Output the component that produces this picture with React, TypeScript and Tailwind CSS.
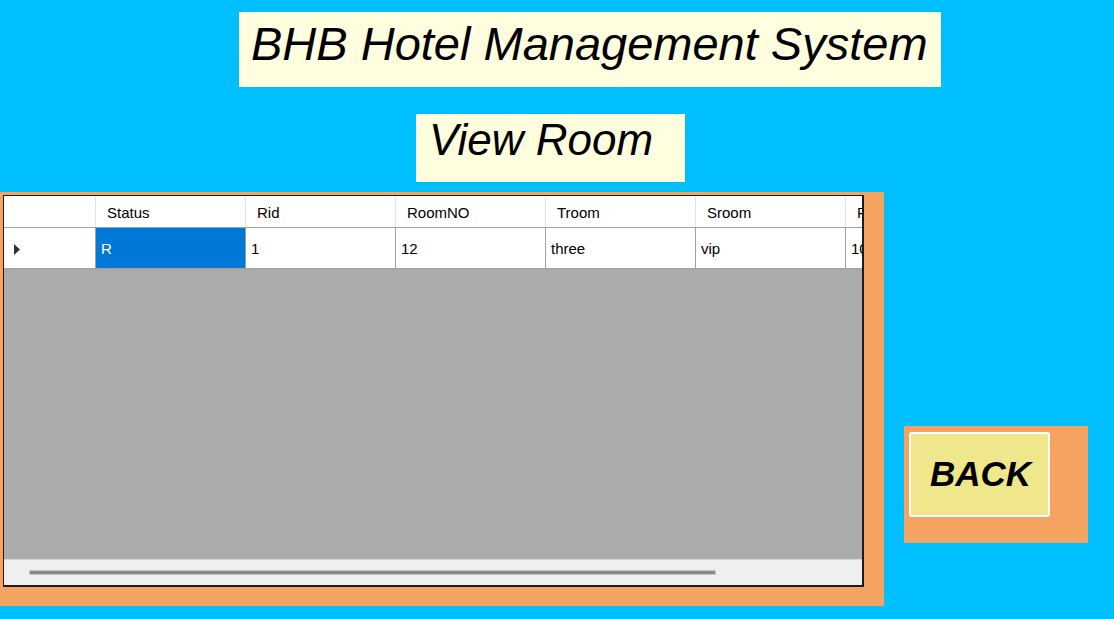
const COLUMNS = ["Status", "Rid", "RoomNO", "Troom", "Sroom", "Price"];
const ROW = ["R", "1", "12", "three", "vip", "1000"];

const font = { fontFamily: '"Liberation Sans", Arial, sans-serif' };

const RoomGrid = () => {
  return (
    <div className="flex h-[392px] w-[861px] flex-col border border-r-2 border-b-2 border-[#1c1c1c] bg-[#ababab] overflow-hidden">
      {/* header row */}
      <div className="flex h-[32px] shrink-0 border-b border-[#a0a0a0] bg-white text-[15px] text-black">
        <div className="w-[92px] shrink-0 border-r border-[#e3e3e3]" />
        {COLUMNS.map((c) => (
          <div key={c} className="flex w-[150px] shrink-0 items-center border-r border-[#e3e3e3] pl-[11px] pt-[3px]">
            {c}
          </div>
        ))}
      </div>

      {/* the one data row */}
      <div className="flex h-[41px] shrink-0 border-b border-[#a0a0a0] bg-white text-[15px] text-black">
        <div className="flex w-[92px] shrink-0 items-center border-r border-[#a0a0a0] pl-[10px] pt-[3px]">
          <svg width="7" height="11" viewBox="0 0 7 11">
            <path d="M0 0 L6 5.5 L0 11 Z" fill="#303030" />
          </svg>
        </div>
        {ROW.map((v, i) => (
          <div
            key={i}
            className={`flex w-[150px] shrink-0 items-center border-r border-[#a0a0a0] pl-[5px] pt-[3px] ${i === 0 ? "bg-[#0078d7] text-white" : ""}`}
          >
            {v}
          </div>
        ))}
      </div>

      <div className="flex-1" />

      {/* horizontal scroll bar */}
      <div className="flex h-[26px] shrink-0 items-center border-t border-[#d6d6d6] bg-[#efefef] pl-[25px]">
        <div className="h-[5px] w-[687px] rounded-[1px] border border-[#c8c8c8] bg-[#8a8a8a]" />
      </div>
    </div>
  );
};

export default function App() {
  return (
    <div className="h-[619px] w-[1114px] overflow-hidden bg-[#00bfff] pt-[12px]" style={font}>
      <div className="ml-[239px] flex h-[75px] w-[702px] items-start bg-[#ffffe0] pl-[12px] pt-[8px]">
        <h1 className="text-[47px] italic leading-none text-black">BHB Hotel Management System</h1>
      </div>

      <div className="ml-[416px] mt-[27px] flex h-[68px] w-[269px] items-start bg-[#ffffe0] pl-[13px] pt-[4px]">
        <h2 className="text-[44px] italic leading-none text-black">View Room</h2>
      </div>

      <div className="mt-[10px] flex items-start">
        <div className="h-[414px] w-[884px] bg-[#f4a460] pl-[3px] pt-[3px]">
          <RoomGrid />
        </div>

        <div className="ml-[20px] mt-[234px] h-[117px] w-[184px] bg-[#f4a460] pl-[5px] pt-[6px]">
          <button className="flex h-[85px] w-[141px] items-center justify-center rounded-[3px] border-2 border-white bg-[#f0e68c] pl-[2px] text-[35px] font-bold italic text-black">
            BACK
          </button>
        </div>
      </div>
    </div>
  );
}
